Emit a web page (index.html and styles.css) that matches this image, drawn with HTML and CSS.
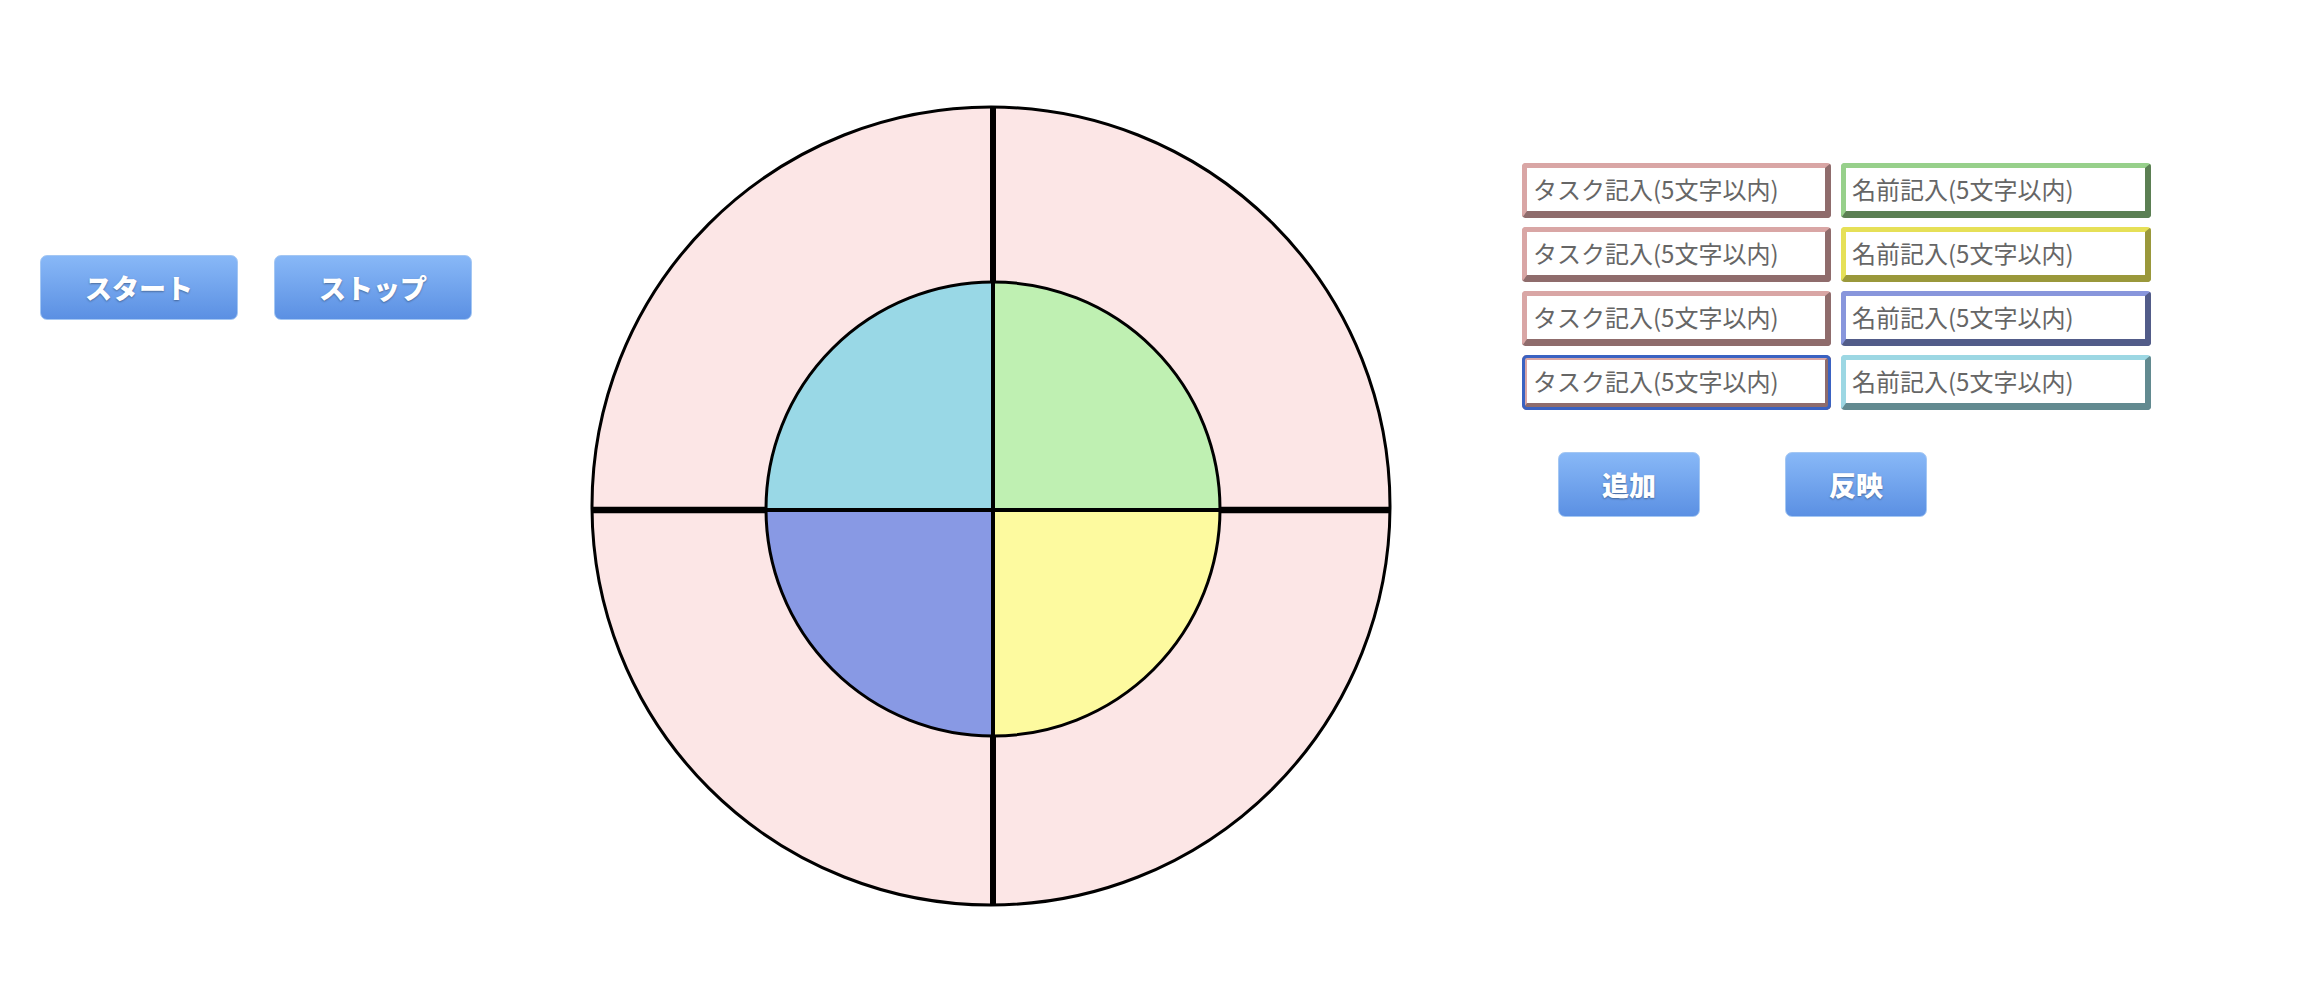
FILE: index.html
```html
<!DOCTYPE html>
<html lang="ja">
<head>
<meta charset="utf-8">
<title>Roulette</title>
<link rel="stylesheet" href="styles.css">
</head>
<body>
<div class="page">
  <div class="controls">
    <button class="btn btn-wide">スタート</button>
    <button class="btn btn-wide">ストップ</button>
  </div>
  <div class="wheel">
    <svg width="810" height="810" viewBox="0 0 810 810">
      <circle cx="405" cy="405" r="399" fill="#fce6e6" stroke="#000" stroke-width="3"/>
      <line x1="407" y1="6" x2="407" y2="804" stroke="#000" stroke-width="6"/>
      <line x1="6" y1="409" x2="804" y2="409" stroke="#000" stroke-width="6.5"/>
      <path d="M407 408 L407 181 A227 227 0 0 0 180 408 Z" fill="#99d8e6"/>
      <path d="M407 408 L407 181 A227 227 0 0 1 634 408 Z" fill="#bff0b2"/>
      <path d="M407 408 L634 408 A227 227 0 0 1 407 635 Z" fill="#fdfa9f"/>
      <path d="M407 408 L407 635 A227 227 0 0 1 180 408 Z" fill="#8899e4"/>
      <circle cx="407" cy="408" r="227" fill="none" stroke="#000" stroke-width="3"/>
      <line x1="407" y1="181" x2="407" y2="635" stroke="#000" stroke-width="4"/>
      <line x1="180" y1="409" x2="634" y2="409" stroke="#000" stroke-width="4"/>
    </svg>
  </div>
  <div class="panel">
    <div class="fields">
      <input class="field pink" type="text" placeholder="タスク記入(5文字以内)">
      <input class="field green" type="text" placeholder="名前記入(5文字以内)">
      <input class="field pink" type="text" placeholder="タスク記入(5文字以内)">
      <input class="field yellow" type="text" placeholder="名前記入(5文字以内)">
      <input class="field pink" type="text" placeholder="タスク記入(5文字以内)">
      <input class="field blue" type="text" placeholder="名前記入(5文字以内)">
      <input class="field pink focused" type="text" placeholder="タスク記入(5文字以内)">
      <input class="field cyan" type="text" placeholder="名前記入(5文字以内)">
    </div>
    <div class="actions">
      <button class="btn btn-small">追加</button>
      <button class="btn btn-small">反映</button>
    </div>
  </div>
</div>
</body>
</html>
```
FILE: styles.css
```css
html, body {
  margin: 0;
  padding: 0;
  background: #fff;
}
body {
  font-family: "Noto Sans CJK JP", "Noto Sans", sans-serif;
  width: 2302px;
  height: 1000px;
  overflow: hidden;
}
.page {
  display: flex;
  align-items: flex-start;
}
.controls {
  display: flex;
  gap: 36px;
  margin-left: 40px;
  margin-top: 255px;
}
.btn {
  box-sizing: border-box;
  height: 65px;
  border: 1px solid #a4c7f3;
  border-radius: 7px;
  background: linear-gradient(#88b8f7, #5b90e3);
  color: #fff;
  font-family: "Noto Sans CJK JP", sans-serif;
  font-weight: 900;
  font-size: 27px;
  text-shadow: 0 1px 2px rgba(0, 0, 0, 0.35);
  padding: 0;
}
.btn-wide {
  width: 198px;
}
.btn-small {
  width: 142px;
  height: 65px;
}
.wheel {
  margin-left: 114px;
  margin-top: 101px;
  width: 810px;
  height: 810px;
}
.wheel svg {
  display: block;
}
.panel {
  margin-left: 126px;
  margin-top: 163px;
}
.fields {
  display: grid;
  grid-template-columns: 309px 310px;
  column-gap: 10px;
  row-gap: 9px;
}
.field {
  box-sizing: border-box;
  width: 100%;
  height: 55px;
  margin: 0;
  padding: 0 0 2px 6px;
  border-style: solid;
  border-width: 5px 6px 7px 5px;
  border-radius: 4px;
  background: #fff;
  font-family: "Noto Sans CJK JP", sans-serif;
  font-size: 24px;
  color: #333;
  outline: none;
}
.field::placeholder {
  color: #666;
}
.pink {
  border-color: #d9a6a5 #8f6c6c #8f6c6c #d9a6a5;
}
.green {
  border-color: #97d08b #5b7f53 #5b7f53 #97d08b;
}
.yellow {
  border-color: #e6e057 #9a983b #9a983b #e6e057;
}
.blue {
  border-color: #8896dc #525c89 #525c89 #8896dc;
}
.cyan {
  border-color: #9cd7e3 #628a90 #628a90 #9cd7e3;
}
.field.focused {
  outline: 3px solid #3a62c2;
  outline-offset: -3px;
  border-radius: 5px;
}
.actions {
  display: flex;
  gap: 85px;
  margin-top: 42px;
  margin-left: 36px;
}
```
